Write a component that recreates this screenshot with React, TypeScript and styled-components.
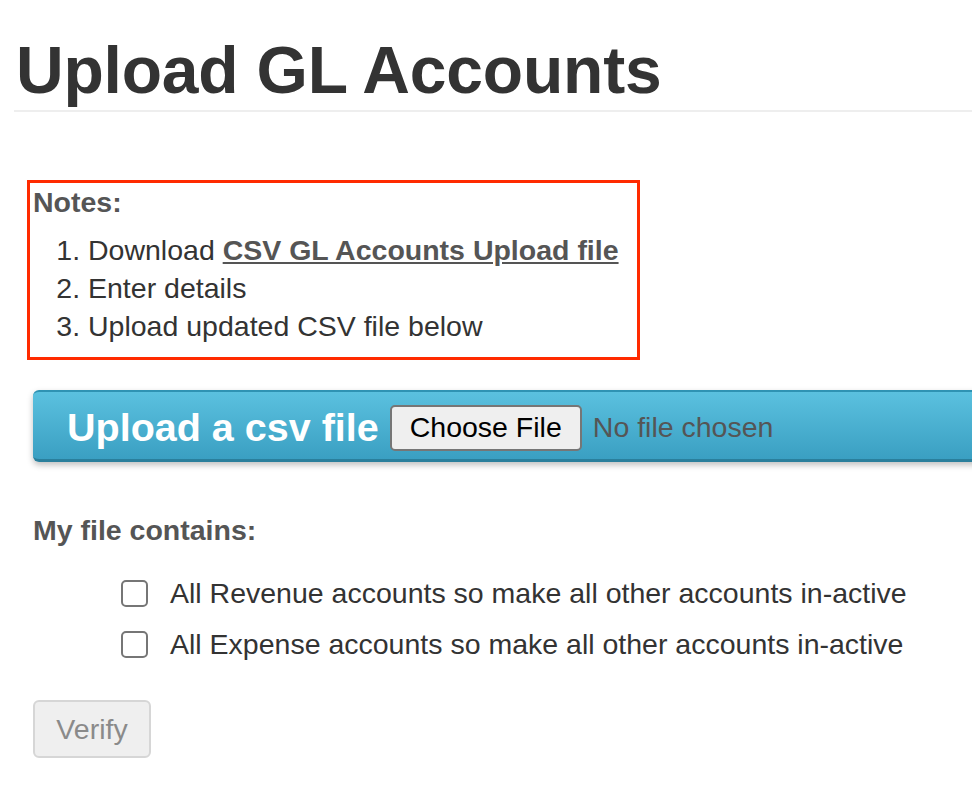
import React from 'react';
import styled, { createGlobalStyle } from 'styled-components';

const GlobalStyle = createGlobalStyle`
  body {
    margin: 0;
    background: #fff;
    font-family: "Liberation Sans", Arial, sans-serif;
    color: #333;
    overflow-x: hidden;
  }
`;

const Page = styled.div`
  padding: 0 0 40px 14px;
`;

const Header = styled.div`
  padding-top: 34px;
  padding-bottom: 4px;
  border-bottom: 2px solid #eeeeee;
`;

const Title = styled.h1`
  margin: 0;
  font-size: 66px;
  line-height: 72px;
  font-weight: bold;
  color: #333;
  padding-left: 2px;
  letter-spacing: -0.2px;
`;

const Body = styled.div`
  padding-left: 13px;
  display: flex;
  flex-direction: column;
  align-items: flex-start;
`;

const NotesBox = styled.div`
  margin-top: 68px;
  border: 3px solid #ff2a00;
  padding: 0 18px 12px 3px;
  font-size: 28.5px;
  line-height: 38px;
`;

const NotesTitle = styled.div`
  font-weight: bold;
  color: #555;
  margin-bottom: 10px;
`;

const Steps = styled.ol`
  margin: 0;
  padding-left: 55px;
  color: #333;
`;

const StepLink = styled.a`
  font-weight: bold;
  color: #555;
  text-decoration: underline;
`;

const Section = styled.div`
  padding-left: 6px;
  align-self: stretch;
  display: flex;
  flex-direction: column;
  align-items: flex-start;
`;

const UploadBar = styled.div`
  margin-top: 30px;
  width: calc(100% + 60px);
  box-sizing: border-box;
  height: 72px;
  display: flex;
  align-items: center;
  gap: 11px;
  padding-left: 34px;
  padding-top: 4px;
  border-radius: 6px;
  border-top: 2px solid #2f93b3;
  border-bottom: 3px solid #2a7f9c;
  background: linear-gradient(#5bc1df, #3a9fc2);
  box-shadow: 0 3px 6px rgba(0, 0, 0, 0.25);
`;

const UploadLabel = styled.span`
  color: #fff;
  font-weight: bold;
  font-size: 39.5px;
`;

const FileButton = styled.label`
  box-sizing: border-box;
  height: 46px;
  padding: 0 18px;
  display: flex;
  align-items: center;
  background: #efefef;
  border: 2px solid #767676;
  border-radius: 5px;
  font-size: 28.5px;
  color: #000;
`;

const FileStatus = styled.span`
  font-size: 28.5px;
  color: #555;
`;

const Subheading = styled.div`
  margin-top: 52px;
  font-size: 28.5px;
  font-weight: bold;
  color: #555;
`;

const Options = styled.div`
  margin-top: 30px;
  padding-left: 88px;
  display: flex;
  flex-direction: column;
  gap: 18px;
`;

const OptionRow = styled.label`
  display: flex;
  align-items: center;
  gap: 22px;
  font-size: 28.5px;
  line-height: 33px;
  color: #333;
`;

const Box = styled.span`
  box-sizing: border-box;
  width: 27px;
  height: 27px;
  border: 2px solid #767676;
  border-radius: 5px;
  background: #fff;
`;

const VerifyButton = styled.button`
  margin-top: 39px;
  width: 118px;
  height: 58px;
  font-family: inherit;
  font-size: 28.5px;
  color: #8a8a8a;
  background: #efefef;
  border: 2px solid #d6d6d6;
  border-radius: 6px;
`;

const App = () => {
  return (
    <Page>
      <GlobalStyle />
      <Header>
        <Title>Upload GL Accounts</Title>
      </Header>
      <Body>
        <NotesBox>
          <NotesTitle>Notes:</NotesTitle>
          <Steps>
            <li>
              Download <StepLink href="#">CSV GL Accounts Upload file</StepLink>
            </li>
            <li>Enter details</li>
            <li>Upload updated CSV file below</li>
          </Steps>
        </NotesBox>
        <Section>
          <UploadBar>
            <UploadLabel>Upload a csv file</UploadLabel>
            <FileButton>Choose File</FileButton>
            <FileStatus>No file chosen</FileStatus>
          </UploadBar>
          <Subheading>My file contains:</Subheading>
          <Options>
            <OptionRow>
              <Box />
              All Revenue accounts so make all other accounts in-active
            </OptionRow>
            <OptionRow>
              <Box />
              All Expense accounts so make all other accounts in-active
            </OptionRow>
          </Options>
          <VerifyButton disabled>Verify</VerifyButton>
        </Section>
      </Body>
    </Page>
  );
};

export default App;
